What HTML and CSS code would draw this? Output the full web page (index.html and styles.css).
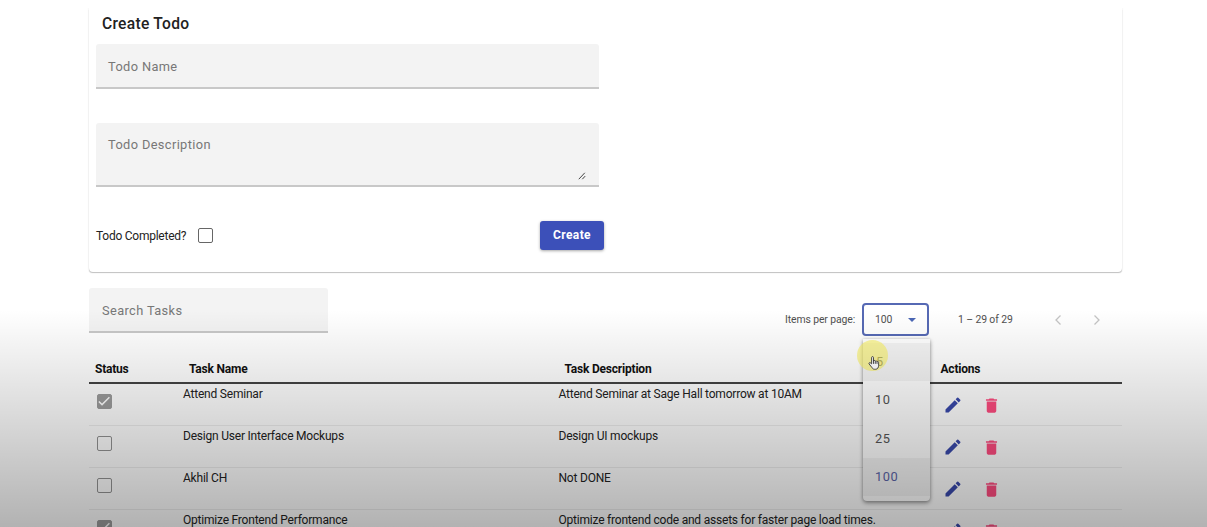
FILE: index.html
```html
<!DOCTYPE html>
<html lang="en">
<head>
<meta charset="utf-8">
<title>Todo</title>
<link rel="stylesheet" href="styles.css">
</head>
<body>
<svg class="defs" width="0" height="0" aria-hidden="true">
  <symbol id="edit" viewBox="0 0 24 24"><path d="M3 17.25V21h3.75L17.81 9.94l-3.75-3.75L3 17.25zM20.71 7.04a1 1 0 0 0 0-1.41l-2.34-2.34a1 1 0 0 0-1.41 0l-1.83 1.83 3.75 3.75 1.83-1.83z"/></symbol>
  <symbol id="trash" viewBox="0 0 24 24"><path d="M6 19c0 1.1.9 2 2 2h8c1.1 0 2-.9 2-2V7H6v12zM19 4h-3.500l-1-1h-5l-1 1H5v2h14V4z"/></symbol>
  <symbol id="check" viewBox="0 0 24 24"><path d="M1.730 12.910 8.100 19.280 22.790 4.590" fill="none" stroke="currentColor" stroke-width="3"/></symbol>
</svg>
<main class="page">
  <section class="card">
    <h1 class="card-title">Create Todo</h1>
    <div class="field name-field">Todo Name</div>
    <div class="field desc-field">Todo Description
      <svg class="grip" viewBox="0 0 8 8"><path d="M.8 7.200 6.800.8M4.300 7.200 7.200 4.100"/></svg>
    </div>
    <div class="form-row">
      <span class="completed">Todo Completed?</span>
      <span class="box"></span>
      <button class="create">Create</button>
    </div>
  </section>

  <div class="toolbar">
    <div class="field search">Search Tasks</div>
    <div class="paginator">
      <span class="per-page">Items per page:</span>
      <div class="select">
        <span>100</span>
        <svg class="caret" viewBox="0 0 8 4"><path d="M0 0h8L4 4z"/></svg>
        <div class="menu">
          <div class="option active">5</div>
          <div class="option">10</div>
          <div class="option">25</div>
          <div class="option selected">100</div>
        </div>
        <div class="pointer">
          <svg viewBox="0 0 14 17"><path d="M4.200 9.500V2.200c0-1.600 2.200-1.600 2.200 0v4c.2-1 2-.9 2.100.3.400-.8 1.900-.6 2 .6.500-.7 1.900-.4 1.900.8v3.300c0 2.300-1.100 4.600-3.500 4.600H7.600c-1.500 0-2.300-.8-3-2L1.300 9.600c-.7-1.300.7-2 1.600-1.200z"/><path d="M6.400 6v3.500M8.500 6.500v3M10.500 7.200v2.300"/></svg>
        </div>
      </div>
      <span class="range">1 – 29 of 29</span>
      <svg class="chev prev" viewBox="0 0 8 12"><path d="M6.500 1.500 2 6l4.500 4.500"/></svg>
      <svg class="chev" viewBox="0 0 8 12"><path d="M1.500 1.500 6 6l-4.500 4.500"/></svg>
    </div>
  </div>

  <div class="table">
    <div class="row head"><span>Status</span><span>Task Name</span><span>Task Description</span><span>Actions</span></div>
    <div class="row"><span class="status"><i class="box checked"><svg><use href="#check"/></svg></i></span><span>Attend Seminar</span><span>Attend Seminar at Sage Hall tomorrow at 10AM</span><span class="actions"><svg class="edit"><use href="#edit"/></svg><svg class="trash"><use href="#trash"/></svg></span></div>
    <div class="row"><span class="status"><i class="box muted"></i></span><span>Design User Interface Mockups</span><span>Design UI mockups</span><span class="actions"><svg class="edit"><use href="#edit"/></svg><svg class="trash"><use href="#trash"/></svg></span></div>
    <div class="row"><span class="status"><i class="box muted"></i></span><span>Akhil CH</span><span>Not DONE</span><span class="actions"><svg class="edit"><use href="#edit"/></svg><svg class="trash"><use href="#trash"/></svg></span></div>
    <div class="row"><span class="status"><i class="box checked"><svg><use href="#check"/></svg></i></span><span>Optimize Frontend Performance</span><span>Optimize frontend code and assets for faster page load times.</span><span class="actions"><svg class="edit"><use href="#edit"/></svg><svg class="trash"><use href="#trash"/></svg></span></div>
  </div>
</main>
<div class="shade"></div>
</body>
</html>
```
FILE: styles.css
```css
* { box-sizing: border-box; }
html, body { margin: 0; height: 527px; overflow: hidden; }
body { background: #fff; font-family: Roboto, "Liberation Sans", sans-serif; color: #222; }
.defs { position: absolute; }
.page { height: 527px; padding: 8px 85px 0 89px; overflow: hidden; }

.card {
  height: 264px;
  padding: 6px 7px 0;
  border-radius: 0 0 4px 4px;
  box-shadow: 0 1.500px 1px -0.500px rgba(0,0,0,.22), 0 0 2px rgba(0,0,0,.12);
  clip-path: inset(0 -4px -5px -4px);
}
.card-title { margin: 0 0 10px 6px; font-size: 15.600px; line-height: 20px; font-weight: 500; letter-spacing: .28px; }
.field {
  background: #f3f3f3;
  border-bottom: 2px solid #c8c8c8;
  border-radius: 3px 3px 0 0;
  color: #777;
  font-size: 12.800px;
  letter-spacing: .38px;
  line-height: 46px;
  padding-left: 12px;
  height: 45px;
}
.name-field, .desc-field { width: 503px; }
.desc-field { height: 64px; margin-top: 34px; line-height: 44px; position: relative; }
.grip { position: absolute; right: 13px; bottom: 5px; width: 8px; height: 8px; fill: none; stroke: #444; stroke-width: 1; }
.form-row { display: flex; align-items: center; height: 30px; margin-top: 33px; }
.completed { font-size: 12px; letter-spacing: -.25px; width: 102px; padding-top: 1px; }
.box { display: block; width: 15px; height: 15px; border: 1.500px solid #666; border-radius: 2px; }
.create {
  margin-left: 327px; width: 64px; height: 29px; padding: 0; border: 0; border-radius: 3px;
  background: #3c50b9; color: #fff; font: 700 12px Roboto, sans-serif; letter-spacing: .4px;
  box-shadow: 0 1px 3px rgba(0,0,0,.35);
}

.toolbar { display: flex; height: 45px; margin-top: 16px; justify-content: space-between; }
.search { width: 239px; padding-left: 13px; }
.paginator { display: flex; align-items: center; height: 33px; margin-top: 15px; margin-right: 21px; font-size: 10.400px; color: #505050; letter-spacing: -.1px; }
.per-page { width: 77px; white-space: nowrap; }
.select { position: relative; display: flex; align-items: center; width: 67px; height: 33px; border: 2px solid #5669b4; border-radius: 4px; padding: 0 11px; justify-content: space-between; }
.caret { width: 8px; height: 4px; fill: #4a66b5; }
.range { width: 96px; margin-left: 29px; white-space: nowrap; }
.chev { width: 8px; height: 12px; fill: none; stroke: #c4c4c4; stroke-width: 1.300; }
.prev { margin-right: 31px; }
.menu {
  position: absolute; left: -1px; top: 34px; z-index: 2; width: 67px; height: 162px; padding: 4px 0 5px;
  background: #fff; border-radius: 0 0 4px 4px;
  box-shadow: 0 2px 4px rgba(0,0,0,.4), 0 0 3px rgba(0,0,0,.15);
}
.option { height: 38.300px; line-height: 38.300px; padding-left: 12px; font-size: 12.800px; letter-spacing: .5px; color: #555; }
.active { background: #f4f4f4; padding-left: 13px; }
.selected { background: #f4f4f4; color: #5b65a8; }
.pointer { position: absolute; left: -7px; top: 35px; z-index: 3; width: 31px; height: 31px; border-radius: 50%; background: rgba(250,242,96,.6); }
.pointer svg { display: block; width: 12px; height: 16px; margin: 15px 0 0 11px; fill: #fff; stroke: #333; stroke-width: 1; }

.table { width: 1033px; margin-top: 20px; font-size: 12px; letter-spacing: -.21px; color: #222; }
.row { display: grid; grid-template-columns: 94px 375.500px 383px 1fr; height: 42.100px; border-bottom: 1px solid #eee; line-height: 14px; padding-top: 3px; }
.row > span { white-space: nowrap; }
.head { height: 31px; border-bottom: 2px solid #444; padding: 9px 0 0 6px; font-weight: 700; color: #111; }
.head > span { line-height: 14px; }
.head > span:last-child { margin-left: -7px; }
.status { padding: 7px 0 0 8px; }
.muted { border-color: #939393; }
.checked { background: #9c9c9c; border-color: #9c9c9c; color: #fff; }
.checked svg { display: block; width: 12px; height: 12px; }
.actions { display: flex; align-items: center; gap: 19px; height: 36px; padding-left: 1px; }
.edit { width: 20px; height: 20px; fill: #3949ab; }
.trash { width: 19px; height: 19px; fill: #ff4c80; }

.shade { position: absolute; left: 0; top: 310px; z-index: 10; width: 100%; height: 217px; pointer-events: none; background: linear-gradient(rgba(0,0,0,0), rgba(0,0,0,.06) 20%, rgba(0,0,0,.3)); }
```
